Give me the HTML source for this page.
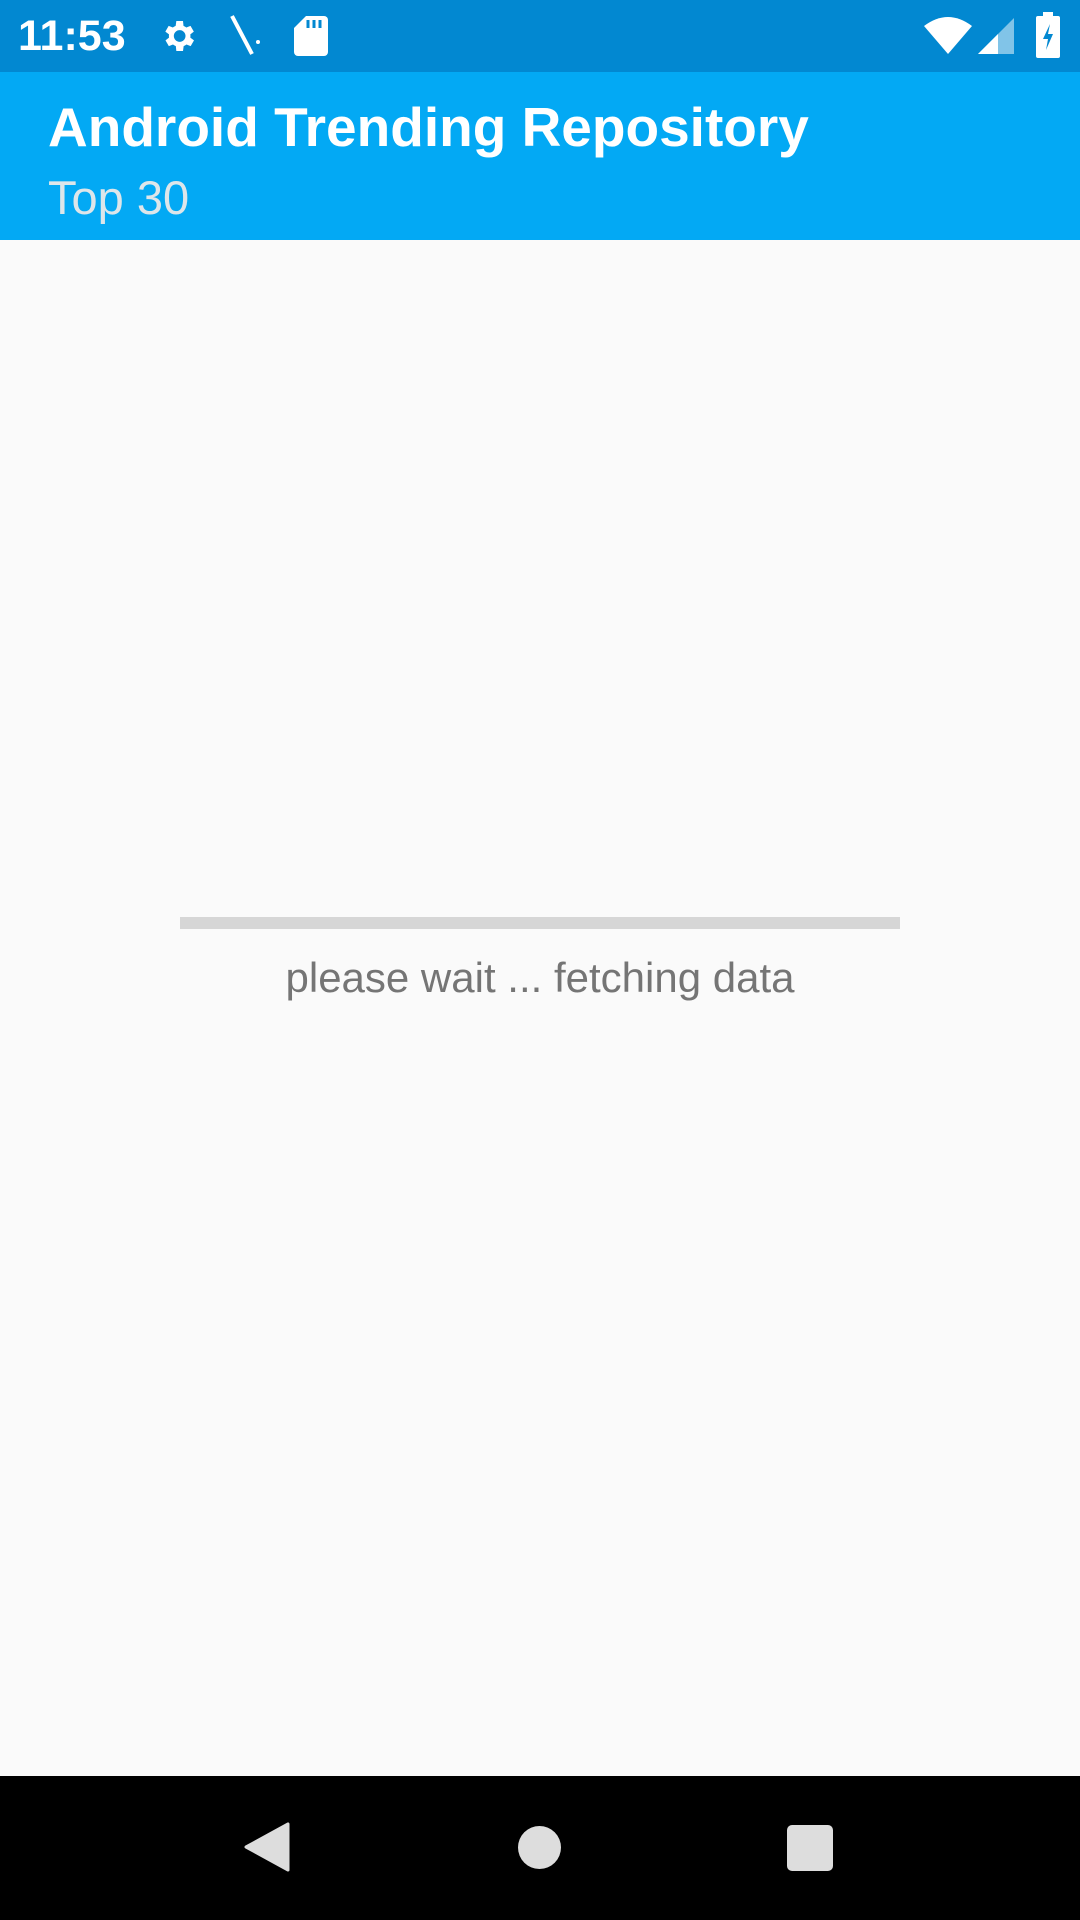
<!DOCTYPE html>
<html><head><meta charset="utf-8"><style>
html,body{margin:0;padding:0;width:1080px;height:1920px;background:#fafafa;font-family:"Liberation Sans",sans-serif;overflow:hidden;position:relative}
.sb{position:absolute;top:0;left:0;width:1080px;height:72px;background:#0288d1;color:#fff}
.ab{position:absolute;top:72px;left:0;width:1080px;height:168px;background:#03a9f4}
.t{position:absolute;left:48px;top:20px;color:#fff;font-size:55px;font-weight:bold;line-height:70px}
.st{position:absolute;left:48px;top:98px;color:#dde6ea;font-size:47px;line-height:56px}
.pb{position:absolute;left:180px;top:917px;width:720px;height:12px;background:#d6d6d6}
.msg{position:absolute;left:0;width:1080px;top:952px;text-align:center;color:#757575;font-size:42px;line-height:52px}
.nav{position:absolute;left:0;top:1776px;width:1080px;height:144px;background:#000}
</style></head><body>
<div class="sb">
<div style="position:absolute;left:18px;top:12px;font-size:43px;line-height:48px;font-weight:bold">11:53</div>
<svg style="position:absolute;left:158px;top:16px" width="40" height="40" viewBox="0 0 24 24"><path fill="#fff" d="M19.4 13a7.5 7.5 0 000-2l2.1-1.6-2-3.5-2.5 1a7 7 0 00-1.7-1L15 3h-4l-.4 2.9a7 7 0 00-1.7 1l-2.5-1-2 3.5L6.6 11a7.5 7.5 0 000 2l-2.1 1.6 2 3.5 2.5-1a7 7 0 001.7 1L11 21h4l.4-2.9a7 7 0 001.7-1l2.5 1 2-3.5zM13 15.5a3.5 3.5 0 110-7 3.5 3.5 0 010 7z"/></svg>
<svg style="position:absolute;left:228px;top:14px" width="34" height="44" viewBox="0 0 34 44"><path d="M4 2 L24 40" stroke="#fff" stroke-width="4"/><circle cx="30" cy="28" r="2" fill="#fff"/></svg>
<svg style="position:absolute;left:294px;top:16px" width="34" height="40" viewBox="0 0 34 40"><path fill="#fff" d="M12 0h18a4 4 0 014 4v32a4 4 0 01-4 4H4a4 4 0 01-4-4V12z"/><path d="M14 4v8M20 4v8M26 4v8" stroke="#0288d1" stroke-width="3"/></svg>
<svg style="position:absolute;left:924px;top:16px" width="48" height="38" viewBox="0 0 48 38"><path fill="#fff" d="M0 10 Q24 -8 48 10 L24 38z"/></svg>
<svg style="position:absolute;left:978px;top:18px" width="36" height="36" viewBox="0 0 36 36"><path fill="#fff" opacity=".5" d="M36 0V36H0z"/><path fill="#fff" d="M20 16V36H0z"/></svg>
<svg style="position:absolute;left:1036px;top:12px" width="24" height="46" viewBox="0 0 24 46"><rect x="7" y="0" width="10" height="5" fill="#fff"/><rect x="0" y="4" width="24" height="42" rx="2" fill="#fff"/><path d="M14 12 L7 27 H12 L10 38 L17 22 H12z" fill="#0288d1"/></svg>
</div>
<div class="ab"><div class="t">Android Trending Repository</div><div class="st">Top 30</div></div>
<div class="pb"></div>
<div class="msg">please wait ... fetching data</div>
<div class="nav">
<svg style="position:absolute;left:244px;top:46px" width="46" height="50" viewBox="0 0 46 50"><path fill="#ddd" d="M44 2 V48 L2 25z" stroke="#ddd" stroke-width="3" stroke-linejoin="round"/></svg>
<div style="position:absolute;left:518px;top:50px;width:43px;height:43px;border-radius:50%;background:#ddd"></div>
<div style="position:absolute;left:787px;top:49px;width:46px;height:46px;border-radius:5px;background:#ddd"></div>
</div>
</body></html>
